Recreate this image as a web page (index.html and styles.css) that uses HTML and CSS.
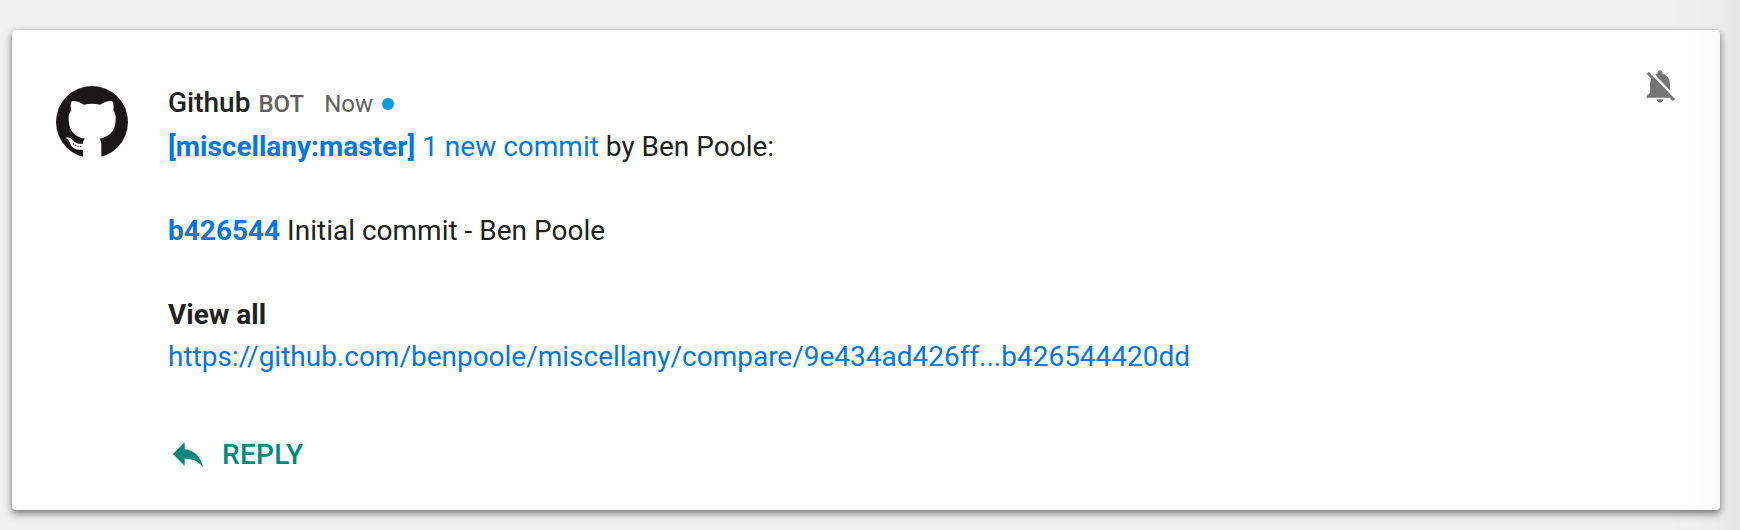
FILE: index.html
```html
<!DOCTYPE html>
<html lang="en">
<head>
<meta charset="utf-8">
<title>Github message</title>
<link rel="stylesheet" href="styles.css">
</head>
<body>
<main class="card">
  <svg class="avatar" viewBox="18 18 216 216" aria-hidden="true">
    <circle class="disc" cx="126" cy="126" r="108"/>
    <path class="cat" d="M65 64C75 61 90 67 102 74Q126 69 150 74C162 67 177 61 187 64C191 72 192 82 190 91C196 99 198 109 197 121C195 155 178 171 149 176C153 182 154 188 154 196V237H99V209C87 211 75 208 67 201C59 193 60 180 47 174C53 169 61 174 68 180C78 190 86 193 99 191C99 185 101 180 105 176C76 172 58 155 56 121C55 109 57 99 64 91C61 82 61 73 65 64Z"/>
    <path class="suckers" d="M69 190C76 197 85 201 99 199"/>
  </svg>
  <article class="message">
    <header class="meta">
      <span class="sender">Github</span>
      <span class="tag">BOT</span>
      <span class="time">Now</span>
      <span class="unread"></span>
    </header>
    <p class="line"><a class="link strong">[miscellany:master]</a> <a class="link">1 new commit</a> by Ben Poole:</p>
    <p class="line spaced"><a class="link strong">b426544</a> Initial commit - Ben Poole</p>
    <p class="line spaced strong">View all</p>
    <p class="line"><a class="link url">https://github.com/benpoole/miscellany/compare/9e434ad426ff...b426544420dd</a></p>
    <div class="reply">
      <svg class="icon" viewBox="0 0 24 24" aria-hidden="true"><path d="M10 9V5l-7 7 7 7v-4.1c5 0 8.5 1.6 11 5.1-1-5-4-10-11-11z"/></svg>
      <span class="reply-label">REPLY</span>
    </div>
  </article>
  <svg class="icon mute" viewBox="0 0 24 24" aria-hidden="true"><path d="M20 18.69L7.84 6.14 5.27 3.49 4 4.76l2.8 2.8v.01c-.52.99-.8 2.16-.8 3.42v5l-2 2v1h13.73l2 2L21 19.72l-1-1.03zM12 22c1.11 0 2-.89 2-2h-4c0 1.11.89 2 2 2zm6-7.32V11c0-3.08-1.64-5.64-4.5-6.32V4c0-.83-.67-1.5-1.5-1.5s-1.5.67-1.5 1.5v.68c-.15.03-.29.08-.42.12-.1.03-.2.07-.3.11h-.01c-.01 0-.01 0-.02.01-.23.09-.46.2-.68.31 0 0-.01 0-.01.01L18 14.68z"/></svg>
</main>
<div class="edge-shade"></div>
</body>
</html>
```
FILE: styles.css
```css
* {
  box-sizing: border-box;
}

body {
  margin: 0;
  height: 530px;
  padding: 30px 20px 20px 12px;
  overflow: hidden;
  background: #f1f1f1;
  color: #212121;
  font: 400 28px/42px Roboto, sans-serif;
}

.card {
  display: flex;
  align-items: flex-start;
  height: 480px;
  padding: 36px 40px 0 44px;
  background: #fff;
  border-radius: 4px;
  box-shadow: 0 4px 10px rgba(0, 0, 0, .26), 0 3px 6px rgba(0, 0, 0, .3), 0 0 4px rgba(0, 0, 0, .08);
}

.avatar {
  width: 72px;
  height: 72px;
  margin: 20px 40px 0 0;
}

.disc {
  fill: #191717;
}

.cat {
  fill: #fff;
}

.suckers {
  fill: none;
  stroke: #444;
  stroke-width: 4;
  stroke-dasharray: 4 4;
}

.message {
  flex: 1;
  padding-top: 16px;
}

.meta {
  display: flex;
  align-items: baseline;
  height: 44px;
}

.sender {
  font-weight: 500;
}

.tag {
  margin-left: 8px;
  color: #616161;
  font-size: 24px;
  font-weight: 500;
}

.time {
  margin-left: 20px;
  color: #616161;
  font-size: 24px;
}

.unread {
  align-self: center;
  width: 12px;
  height: 12px;
  margin-left: 9px;
  background: #039be5;
  border-radius: 50%;
}

.line {
  margin: 0;
  white-space: nowrap;
}

.spaced {
  margin-top: 42px;
}

.strong {
  font-weight: 700;
}

.link {
  color: #0277e6;
}

.url {
  letter-spacing: -.01px;
}

.reply {
  display: flex;
  align-items: center;
  gap: 14px;
  height: 40px;
  margin-top: 56px;
  color: #00897b;
  font-weight: 500;
}

.reply-label {
  padding-top: 2px;
  letter-spacing: .28px;
}

.icon {
  width: 40px;
  height: 40px;
  fill: currentColor;
}

.mute {
  color: #757575;
}

.edge-shade {
  position: absolute;
  top: 0;
  right: 0;
  width: 70px;
  height: 530px;
  background: linear-gradient(to right, rgba(0, 0, 0, 0), rgba(0, 0, 0, .015) 65%, rgba(0, 0, 0, .05));
}
```
